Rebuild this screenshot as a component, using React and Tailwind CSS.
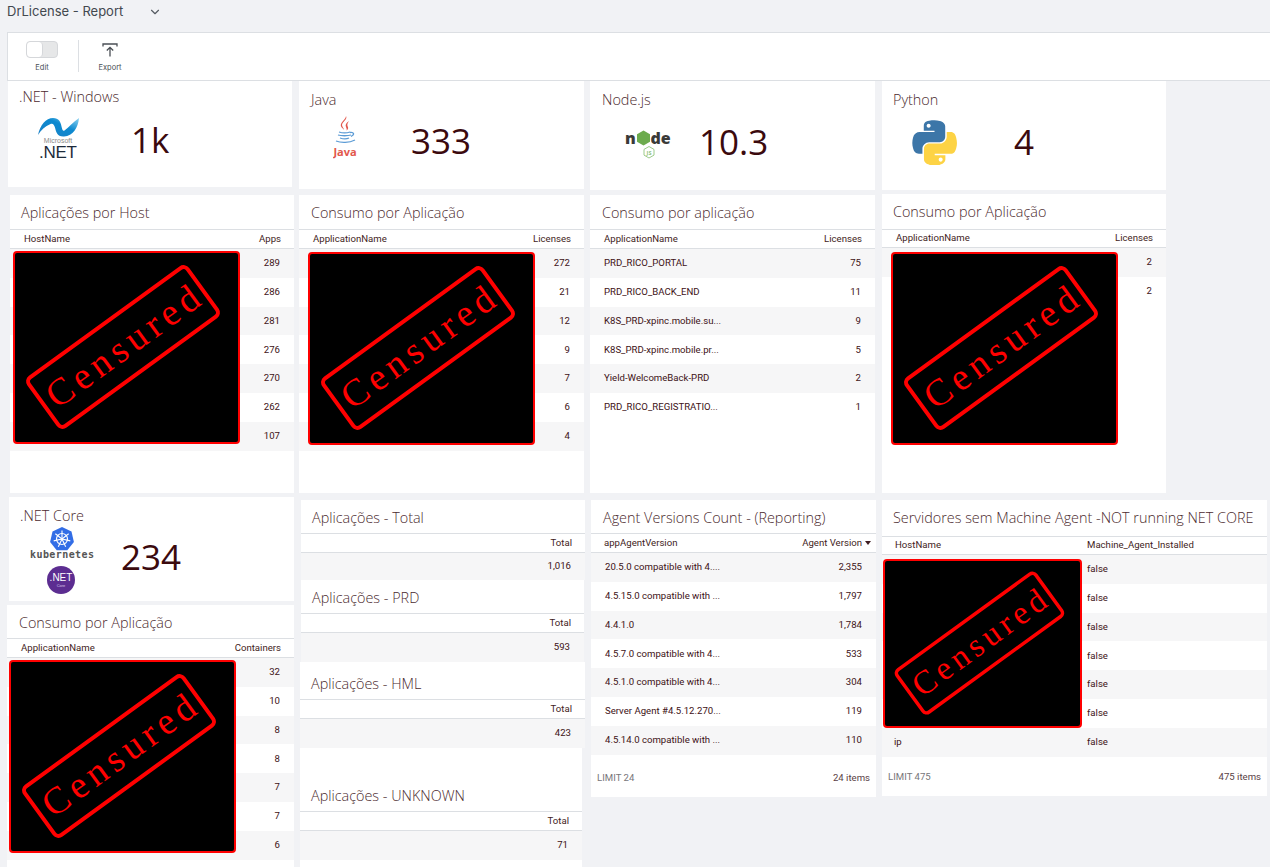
import { ChevronDown } from 'lucide-react';

const LICENSES_RICO = [
  ['PRD_RICO_PORTAL', '75'],
  ['PRD_RICO_BACK_END', '11'],
  ['K8S_PRD-xpinc.mobile.su...', '9'],
  ['K8S_PRD-xpinc.mobile.pr...', '5'],
  ['Yield-WelcomeBack-PRD', '2'],
  ['PRD_RICO_REGISTRATIO...', '1'],
];

const AGENT_VERSIONS = [
  ['20.5.0 compatible with 4....', '2,355'],
  ['4.5.15.0 compatible with ...', '1,797'],
  ['4.4.1.0', '1,784'],
  ['4.5.7.0 compatible with 4...', '533'],
  ['4.5.1.0 compatible with 4...', '304'],
  ['Server Agent #4.5.12.270...', '119'],
  ['4.5.14.0 compatible with ...', '110'],
];

const numbers = (list) => list.map((n) => ['', n]);
const openSans = { fontFamily: '"Open Sans", sans-serif' };

function Censored({ className }) {
  return (
    <div className={`absolute bg-black border-2 border-[#f00] rounded-[4px] overflow-hidden ${className}`}>
      <svg viewBox="2 2 223 189" preserveAspectRatio="none" className="block w-full h-full">
        <g transform="translate(110 96) rotate(-36)">
          <rect x="-98" y="-30" width="196" height="60" rx="5" fill="none" stroke="#f00" strokeWidth="4" />
          <text x="-90" y="12" textLength="180" lengthAdjust="spacing" fontFamily='"Liberation Serif", serif' fontSize="38" fill="#f00">Censured</text>
        </g>
      </svg>
    </div>
  );
}

function Panel({ title, headers, rows, className = '', titleClass = 'h-[34px] pb-[6px] pl-[12px]', headClass = 'h-[18px]', rowClass = 'h-[28.8px]', footer, caret, twoLeft, children }) {
  return (
    <section className={`relative flex flex-col bg-white ${className}`}>
      <div className={`flex items-end shrink-0 ${titleClass}`}>
        <h3 className="text-[14.4px] leading-5 font-light text-[#4b2a2e] whitespace-nowrap" style={openSans}>{title}</h3>
      </div>
      <div className={`${twoLeft ? 'grid grid-cols-[192px_1fr] pl-[13px]' : 'flex justify-between'} items-center shrink-0 box-content border-y border-[#dcdfe3] text-[9.6px] text-[#3f1d22] ${headClass} ${caret ? 'pl-[13px] pr-[5px]' : twoLeft ? '' : 'pl-[14px] pr-[13px]'}`}>
        <span>{headers[0]}</span>
        <span className="flex items-center gap-[3px]">
          {headers[1]}
          {caret && <svg width="6" height="4" viewBox="0 0 6 4"><path d="M0 0h6L3 4z" fill="#3f1d22" /></svg>}
        </span>
      </div>
      {rows.map(([a, b], i) => (
        <div key={i} className={`${twoLeft ? 'grid grid-cols-[193px_1fr] pl-[12px]' : 'flex justify-between pl-[14px] pr-[14px]'} items-center shrink-0 text-[9.6px] text-[#3d1216] ${rowClass} ${i % 2 === 0 ? 'bg-[#f6f6f7]' : 'bg-white'}`}>
          <span className="whitespace-nowrap">{a}</span>
          <span>{b}</span>
        </div>
      ))}
      {footer && (
        <div className="mt-auto h-[38px] shrink-0 flex items-center justify-between px-[6px] text-[9.6px]">
          <span className="text-[#77767a]">{footer[0]}</span>
          <span className="text-[#5a4245]">{footer[1]}</span>
        </div>
      )}
      {children}
    </section>
  );
}

function Stat({ title, icon, value, className = '', titleClass, iconClass, valueClass }) {
  return (
    <section className={`bg-white ${className}`}>
      <h3 className={`text-[14.4px] leading-5 font-light text-[#4b2a2e] ${titleClass}`} style={openSans}>{title}</h3>
      <div className="flex items-start">
        <div className={`shrink-0 ${iconClass}`}>{icon}</div>
        <div className={`text-[35px] leading-[46px] text-[#3b0a0e] ${valueClass}`} style={openSans}>{value}</div>
      </div>
    </section>
  );
}

function DotNetLogo() {
  return (
    <svg width="42" height="44" viewBox="0 0 42 44" className="block">
      <defs>
        <linearGradient id="netSwoosh" x1="0" y1="1" x2="1" y2="0">
          <stop offset="0" stopColor="#1c7fc4" />
          <stop offset="0.6" stopColor="#0d8ad0" />
          <stop offset="1" stopColor="#8fd4f2" />
        </linearGradient>
      </defs>
      <path d="M1 17C3 7 9 0 16 0c6 0 7.500 4 8.500 8.500 .8 3.500 1.500 5 3 4C32 9 36 4 42 0c-1 10-6 18-15 18.500-7 .4-8-5-9-9C17 6 15.500 5 13.500 6 8 8.500 4 12 1 17z" fill="url(#netSwoosh)" />
      <text x="21" y="25" textAnchor="middle" fontFamily='"Liberation Sans", sans-serif' fontSize="7" fill="#8a8a8a">Microsoft</text>
      <text x="21" y="39.500" textAnchor="middle" fontFamily='"Liberation Sans", sans-serif' fontSize="17" fill="#1d2b3a" textLength="38">.NET</text>
    </svg>
  );
}

function JavaLogo() {
  return (
    <svg width="24" height="44" viewBox="0 0 24 44" className="block">
      <path d="M13 0c2 3-4 6-4 9 0 2 2 3 2 5-1-2-4-3-3-6 1-3 5-5 5-8zM16 5c-3 2-4 4-3 6 .5 1.500 1 2 .5 3.500 2-1.500 2-3 1-4.500-.5-1.500 0-3 1.500-5z" fill="#e2574c" />
      <path d="M6 16c3 1 8 1 11 0M5 19c3 1 10 1 13 0M7 22c3 1 7 1 9 0M17 16.500c4-.5 5 2 1 4M3 25c5 2 13 2 19-1" fill="none" stroke="#5b9bd5" strokeWidth="1.300" />
      <text x="12" y="40" textAnchor="middle" fontFamily='"Open Sans", sans-serif' fontWeight="700" fontSize="11" fill="#e2574c">Java</text>
    </svg>
  );
}

function NodeLogo() {
  return (
    <svg width="50" height="31" viewBox="0 0 50 31" className="block">
      <text x="0" y="16" fontFamily='"Open Sans", sans-serif' fontWeight="800" fontSize="16" fill="#3a3a38">n</text>
      <path d="M18.500 2.500l6.500 3.800v7.400l-6.500 3.800-6.500-3.800V6.300z" fill="#6cab4d" />
      <text x="25.500" y="16" fontFamily='"Open Sans", sans-serif' fontWeight="800" fontSize="16" fill="#3a3a38">de</text>
      <path d="M24 18.500l5 2.900v5.700L24 30l-5-2.900v-5.700z" fill="#fff" stroke="#9ccb8a" strokeWidth="1" />
      <text x="24" y="26.500" textAnchor="middle" fontFamily='"Open Sans", sans-serif' fontWeight="700" fontSize="5.500" fill="#8fc27c">JS</text>
    </svg>
  );
}

function PythonLogo() {
  return (
    <svg width="45" height="45" viewBox="0 0 110 110" className="block">
      <path fillRule="evenodd" fill="#3c76a8" d="M54.900.9c-4.600 0-9 .4-12.800 1.100C30.800 4 28.800 8.100 28.800 15.800V26h26.200v3.400H19c-7.600 0-14.300 4.600-16.400 13.300-2.400 10-2.500 16.200 0 26.600 1.900 7.800 6.300 13.300 13.900 13.300h9v-12c0-8.700 7.500-16.300 16.400-16.300h26.200c7.300 0 13.100-6 13.100-13.300V15.800c0-7.100-6-12.400-13.100-13.600C63.400 1.500 58.700.9 54.900.9zM40.700 9c2.700 0 4.900 2.200 4.900 5 0 2.700-2.200 4.900-4.900 4.900-2.700 0-4.900-2.200-4.900-4.900 0-2.800 2.200-5 4.900-5z" />
      <path fillRule="evenodd" fill="#fdd345" d="M84.900 29.400v11.700c0 9-7.700 16.600-16.400 16.600H42.300c-7.200 0-13.100 6.100-13.100 13.300v25c0 7.100 6.200 11.300 13.100 13.300 8.300 2.400 16.300 2.900 26.200 0 6.600-1.900 13.100-5.800 13.100-13.300V86H55.500v-3.300h39.300c7.600 0 10.500-5.300 13.100-13.300 2.700-8.200 2.600-16.100 0-26.600-1.900-7.600-5.500-13.300-13.100-13.300h-10zM70.100 91.900c2.700 0 4.900 2.200 4.900 4.900 0 2.800-2.200 5-4.900 5-2.700 0-4.900-2.200-4.900-5 0-2.700 2.200-4.900 4.900-4.900z" />
    </svg>
  );
}

function KubeLogo() {
  const spokes = [0, 51.4, 102.8, 154.3, 205.7, 257.1, 308.6];
  return (
    <svg width="66" height="68" viewBox="0 0 66 68" className="block">
      <path d="M32 1l9.500 4.600 2.400 10.300-6.600 8.300H26.700l-6.600-8.300 2.400-10.300z" fill="#326de6" />
      <circle cx="32" cy="13" r="5.500" fill="none" stroke="#fff" strokeWidth="1.200" />
      {spokes.map((a) => (
        <line key={a} x1="32" y1="13" x2="32" y2="4.500" stroke="#fff" strokeWidth="1.100" transform={`rotate(${a} 32 13)`} />
      ))}
      <text x="32" y="32" textAnchor="middle" fontFamily='"DejaVu Sans Mono", monospace' fontWeight="700" fontSize="10" fill="#555" textLength="64">kubernetes</text>
      <circle cx="31" cy="54" r="14" fill="#5c2d91" />
      <text x="31" y="55" textAnchor="middle" fontFamily='"Liberation Sans", sans-serif' fontSize="10" fill="#fff">.NET</text>
      <text x="31" y="61" textAnchor="middle" fontFamily='"Liberation Sans", sans-serif' fontSize="4" fill="#d8c8ea">Core</text>
    </svg>
  );
}

function Toolbar() {
  return (
    <div className="ml-[7px] h-[49px] flex items-start bg-white border border-r-0 border-[#dcdfe3] text-[7.5px] text-[#4a4f55]" style={{ fontFamily: 'Inter, sans-serif' }}>
      <div className="w-[70px] flex flex-col items-center pt-[8px]">
        <div className="ml-[-2px] w-[32px] h-[17px] flex rounded-[4px] border border-[#d5d7da] bg-[#e6e7e8]">
          <div className="w-[16px] rounded-[4px] bg-white border-r border-[#d5d7da]" />
        </div>
        <span className="mt-[5px] leading-[10px] ml-[-2px]">Edit</span>
      </div>
      <div className="mt-[7px] h-[32px] w-px bg-[#dcdfe3]" />
      <div className="ml-[13px] w-[36px] flex flex-col items-center pt-[10px]">
        <svg width="16" height="14" viewBox="0 0 16 14" fill="none" stroke="#4a4f55" strokeWidth="1.300">
          <path d="M1 3.500V1h14v2.500" />
          <path d="M8 13.500V4.500M4.800 7.500 8 4.300l3.200 3.200" />
        </svg>
        <span className="mt-[6px] leading-[10px]">Export</span>
      </div>
    </div>
  );
}

export default function App() {
  return (
    <div className="h-screen overflow-hidden bg-[#f1f2f5]" style={{ fontFamily: 'Roboto, sans-serif' }}>
      <header className="h-[32px] flex items-center pl-[7px] text-[13px] text-[#42484f] pb-[9px]" style={{ fontFamily: 'Inter, sans-serif' }}>
        <span>DrLicense - Report</span>
        <ChevronDown size={14} className="ml-[25px] text-[#555b62]" />
      </header>
      <Toolbar />

      <main className="flex items-start">
        <div className="ml-[7px] w-[287px] shrink-0">
          <Stat title=".NET - Windows" icon={<DotNetLogo />} value="1k" className="ml-[1px] w-[284px] h-[106px] pt-[6px] pl-[11px]" iconClass="ml-[18px] mt-[11px]" valueClass="ml-[52px] mt-[10px]" />
          <Panel title="Aplicações por Host" headers={['HostName', 'Apps']} rows={numbers(['289', '286', '281', '276', '270', '262', '107'])} titleClass="h-[34px] pb-[6px] pl-[11px]" className="mt-[8px] ml-[3px] w-[284px] h-[298px]">
            <Censored className="left-[3px] top-[56px] w-[227px] h-[193px]" />
          </Panel>
          <Stat title=".NET Core" icon={<KubeLogo />} value="234" className="mt-[4px] ml-[2px] w-[285px] h-[104px] pt-[9px] pl-[11px]" iconClass="ml-[10px]" valueClass="ml-[25px] mt-[8px]" />
          <Panel title="Consumo por Aplicação" headers={['ApplicationName', 'Containers']} rows={numbers(['32', '10', '8', '8', '7', '7', '6'])} titleClass="h-[33px] pb-[5px] pl-[12px]" className="mt-[4px] w-[287px] h-[270px]">
            <Censored className="left-[2px] top-[55px] w-[227px] h-[193px]" />
          </Panel>
        </div>

        <div className="ml-[5px] w-[287px] shrink-0">
          <Stat title="Java" icon={<JavaLogo />} value="333" className="w-[285px] h-[108px] pt-[9px] pl-[12px]" iconClass="ml-[22px] mt-[6px]" valueClass="ml-[54px] mt-[8px]" />
          <Panel title="Consumo por Aplicação" headers={['ApplicationName', 'Licenses']} rows={numbers(['272', '21', '12', '9', '7', '6', '4'])} className="mt-[6px] w-[285px] h-[298px]">
            <Censored className="left-[9px] top-[57px] w-[227px] h-[193px]" />
          </Panel>
          <Panel title="Aplicações - Total" headers={['', 'Total']} rows={numbers(['1,016'])} titleClass="h-[33px] pb-[5px] pl-[11px]" rowClass="h-[27px]" className="mt-[7px] ml-[2px] w-[284px]" />
          <Panel title="Aplicações - PRD" headers={['', 'Total']} rows={numbers(['593'])} titleClass="h-[33px] pb-[5px] pl-[11px]" rowClass="h-[29px]" className="ml-[2px] w-[283px]" />
          <Panel title="Aplicações - HML" headers={['', 'Total']} rows={numbers(['423'])} titleClass="h-[37px] pb-[5px] pl-[11px]" rowClass="h-[29px]" className="ml-[1px] w-[285px]" />
          <Panel title="Aplicações - UNKNOWN" headers={['', 'Total']} rows={numbers(['71'])} titleClass="h-[63px] pb-[5px] pl-[11px]" rowClass="h-[29px]" className="ml-[1px] w-[282px] h-[130px]" />
        </div>

        <div className="ml-[4px] w-[292px] shrink-0">
          <Stat title="Node.js" icon={<NodeLogo />} value="10.3" className="w-[285px] h-[109px] pt-[9px] pl-[12px]" iconClass="ml-[23px] mt-[18px]" valueClass="ml-[24px] mt-[9px]" />
          <Panel title="Consumo por aplicação" headers={['ApplicationName', 'Licenses']} rows={LICENSES_RICO} className="mt-[5px] w-[285px] h-[298px]" />
          <Panel title="Agent Versions Count - (Reporting)" headers={['appAgentVersion', 'Agent Version']} rows={AGENT_VERSIONS} caret footer={['LIMIT 24', '24 items']} titleClass="h-[33px] pb-[5px] pl-[12px]" className="mt-[7px] ml-[1px] w-[285px] h-[297px]" />
        </div>

        <div className="w-[388px] shrink-0">
          <Stat title="Python" icon={<PythonLogo />} value="4" className="w-[284px] h-[109px] pt-[9px] pl-[11px]" iconClass="ml-[19px] mt-[10px]" valueClass="ml-[57px] mt-[9px]" />
          <Panel title="Consumo por Aplicação" headers={['ApplicationName', 'Licenses']} rows={numbers(['2', '2'])} titleClass="h-[35px] pb-[7px] pl-[11px]" headClass="h-[17px]" className="mt-[4px] w-[284px] h-[299px]">
            <Censored className="left-[9px] top-[58px] w-[227px] h-[193px]" />
          </Panel>
          <Panel title="Servidores sem Machine Agent -NOT running NET CORE" headers={['HostName', 'Machine_Agent_Installed']} rows={[['', 'false'], ['', 'false'], ['', 'false'], ['', 'false'], ['', 'false'], ['', 'false'], ['ip', 'false']]} twoLeft footer={['LIMIT 475', '475 items']} titleClass="h-[36px] pb-[8px] pl-[11px]" headClass="h-[17px]" className="mt-[7px] w-[385px] h-[296px]">
            <Censored className="left-[1px] top-[59px] w-[199px] h-[169px]" />
          </Panel>
        </div>
      </main>
    </div>
  );
}
